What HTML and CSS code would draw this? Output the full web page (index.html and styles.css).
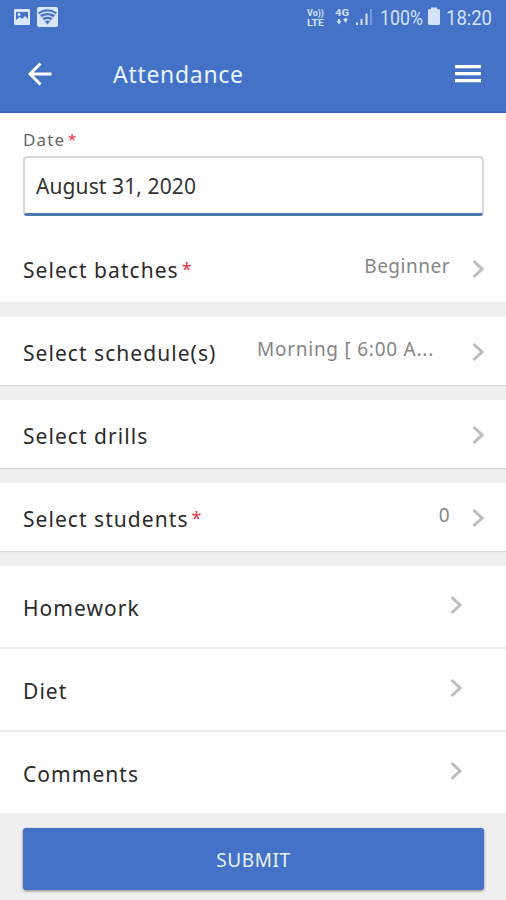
FILE: index.html
```html
<!DOCTYPE html>
<html lang="en">
<head>
    <meta charset="UTF-8">
    <meta name="viewport" content="width=device-width, initial-scale=1.0">
    <title>Attendance</title>
    <link rel="stylesheet" href="styles.css">
</head>
<body>
    <header class="header">
        <div class="status-bar">
            <svg class="status-left" width="50" height="36" viewBox="0 0 50 36">
                <rect x="5" y="9" width="16" height="16" rx="1" fill="#dce6fb"/>
                <path d="M7 12h12v7l-3-3-3 3-2-2-4 3z" fill="#4472c6"/>
                <circle cx="10" cy="14.500" r="1.500" fill="#dce6fb"/>
                <rect x="28" y="7" width="21" height="20" rx="2" fill="#dce6fb"/>
                <path d="M29 12.500Q38.500 6 48 12.500L38.500 24.500Z" fill="#4472c6"/>
                <path d="M30.500 14.500Q38.500 10 46.500 14.500M33 17.500Q38.500 14.500 44 17.500M35.500 20.500Q38.500 19 41.500 20.500" fill="none" stroke="#dce6fb" stroke-width="1.300"/>
            </svg>
            <svg class="status-right" width="190" height="36" viewBox="0 0 190 36" fill="#d5e2fb">
                <text class="status-tiny" x="1" y="15.500" textLength="17" lengthAdjust="spacingAndGlyphs">Vo))</text>
                <text class="status-tiny" x="1" y="25.500" textLength="17" lengthAdjust="spacingAndGlyphs">LTE</text>
                <text class="status-tiny" x="29" y="16" textLength="14" lengthAdjust="spacingAndGlyphs">4G</text>
                <path d="M30.500 21h1.500v-2h2v2h1.500L33 24.500zM37 19h1.500v-1h2v1H42L39.500 23z"/>
                <path d="M50 22.500h2v2.500h-2zM54.500 19h2v6h-2zM59.500 13.500h2v11.500h-2z"/>
                <path d="M64 9h2v16h-2z" opacity=".35"/>
                <text class="status-text" x="74" y="25" textLength="43" lengthAdjust="spacingAndGlyphs">100%</text>
                <path d="M125 7.500h6V9h1.500a1.500 1.500 0 0 1 1.500 1.500v13A1.500 1.500 0 0 1 132.500 25h-9a1.500 1.500 0 0 1-1.500-1.500v-13A1.500 1.500 0 0 1 123.500 9h1.500z"/>
                <text class="status-text" x="140" y="25" textLength="46" lengthAdjust="spacingAndGlyphs">18:20</text>
            </svg>
        </div>
        <div class="toolbar">
            <svg class="back" width="24" height="24" viewBox="0 0 24 24">
                <path d="M12.500 1.500L2 12l10.500 10.500M2 12h21.500" fill="none" stroke="#fff" stroke-width="3"/>
            </svg>
            <h1>Attendance</h1>
            <svg class="menu" width="26" height="20" viewBox="0 0 26 20">
                <path d="M0 1h26v3.200H0zM0 8h26v3.200H0zM0 15h26v3.200H0z" fill="#fff"/>
            </svg>
        </div>
    </header>

    <main>
        <div class="date-field">
            <label for="date">Date<span class="required small">*</span></label>
            <input type="text" id="date" value="August 31, 2020">
        </div>

        <div class="row first">
            <span class="label">Select batches<span class="required">*</span></span>
            <span class="value">Beginner</span>
            <svg class="chevron" width="12" height="20" viewBox="0 0 12 20"><path d="M1.500 2l8.500 8-8.500 8"/></svg>
        </div>
        <div class="row">
            <span class="label">Select schedule(s)</span>
            <span class="value schedule">Morning [ 6:00 A...</span>
            <svg class="chevron" width="12" height="20" viewBox="0 0 12 20"><path d="M1.500 2l8.500 8-8.500 8"/></svg>
        </div>
        <div class="row">
            <span class="label">Select drills</span>
            <svg class="chevron" width="12" height="20" viewBox="0 0 12 20"><path d="M1.500 2l8.500 8-8.500 8"/></svg>
        </div>
        <div class="row">
            <span class="label">Select students<span class="required">*</span></span>
            <span class="value">0</span>
            <svg class="chevron" width="12" height="20" viewBox="0 0 12 20"><path d="M1.500 2l8.500 8-8.500 8"/></svg>
        </div>

        <div class="notes">
            <div class="note">
                <span class="label">Homework</span>
                <svg class="chevron" width="12" height="20" viewBox="0 0 12 20"><path d="M1.500 2l8.500 8-8.500 8"/></svg>
            </div>
            <div class="note">
                <span class="label">Diet</span>
                <svg class="chevron" width="12" height="20" viewBox="0 0 12 20"><path d="M1.500 2l8.500 8-8.500 8"/></svg>
            </div>
            <div class="note">
                <span class="label">Comments</span>
                <svg class="chevron" width="12" height="20" viewBox="0 0 12 20"><path d="M1.500 2l8.500 8-8.500 8"/></svg>
            </div>
        </div>

        <button class="btn-submit">SUBMIT</button>
    </main>
</body>
</html>
```
FILE: styles.css
```css
* {
    box-sizing: border-box;
}

body {
    margin: 0;
    height: 900px;
    overflow: hidden;
    background-color: #efefef;
    font-family: 'Noto Sans', 'Open Sans', sans-serif;
    font-size: 21px;
    color: #2b2b2b;
}

.header {
    height: 113px;
    background-color: #4472c6;
    border-bottom: 2px solid #3a66b5;
}

.status-bar {
    display: flex;
    justify-content: space-between;
    height: 36px;
    padding: 0 10px 0 9px;
}

.status-right {
    overflow: visible;
}

.status-text {
    font-family: Roboto, sans-serif;
    font-size: 21px;
}

.status-tiny {
    font-family: Roboto, sans-serif;
    font-size: 9px;
    font-weight: 700;
}

.toolbar {
    display: flex;
    align-items: center;
    height: 76px;
    padding: 0 25px 0 28px;
}

.toolbar h1 {
    flex: 1;
    margin: 0 0 0 61px;
    font-size: 23px;
    font-weight: 400;
    letter-spacing: 0.7px;
    color: #e8f4ff;
}

.date-field {
    height: 122px;
    padding: 15px 22px 0 23px;
    background-color: #fff;
}

.date-field label {
    display: block;
    height: 28px;
    font-size: 17px;
    line-height: 24px;
    letter-spacing: 1.1px;
    color: #666;
}

.date-field input {
    display: block;
    width: 100%;
    height: 60px;
    padding: 0 11px;
    border: 2px solid #d8d8d8;
    border-bottom: 3px solid #4c78b0;
    border-radius: 4px;
    font: inherit;
    letter-spacing: 0.1px;
    color: #333;
    outline: none;
}

.required {
    margin-left: 3px;
    font-size: 18px;
    line-height: 1;
    vertical-align: 2px;
    color: #dc3545;
}

.required.small {
    font-size: 15px;
    vertical-align: 1px;
}

.row {
    display: flex;
    align-items: center;
    height: 68px;
    margin-bottom: 15px;
    padding: 4px 22px 0 23px;
    background-color: #fff;
    box-shadow: 0 1px 1px #d8d8d8;
}

.row.first {
    height: 67px;
    padding-top: 3px;
    box-shadow: none;
}

.label {
    flex: 1;
    letter-spacing: 1.05px;
    white-space: nowrap;
}

.value {
    margin: -8px 22px 0 0;
    font-size: 19px;
    letter-spacing: 0.5px;
    color: #858585;
}

.value.schedule {
    margin-right: 38px;
    letter-spacing: 0.75px;
}

.chevron path {
    fill: none;
    stroke: #bdbdbd;
    stroke-width: 3;
}

.row .chevron {
    margin-top: -3px;
}

.note {
    display: flex;
    align-items: center;
    height: 83px;
    padding: 2px 44px 0 23px;
    background-color: #fff;
    border-bottom: 2px solid #ececec;
}

.note:last-child {
    height: 81px;
    border-bottom: none;
}

.note .chevron {
    margin-top: -6px;
}

.btn-submit {
    display: block;
    width: 461px;
    height: 62px;
    margin: 15px 0 0 23px;
    padding-top: 3px;
    border: none;
    border-radius: 3px;
    background-color: #4472c6;
    box-shadow: 0 1px 3px rgba(0,0,0,0.45);
    font: inherit;
    font-size: 19px;
    letter-spacing: 0.6px;
    color: #e8f4ff;
}
```
